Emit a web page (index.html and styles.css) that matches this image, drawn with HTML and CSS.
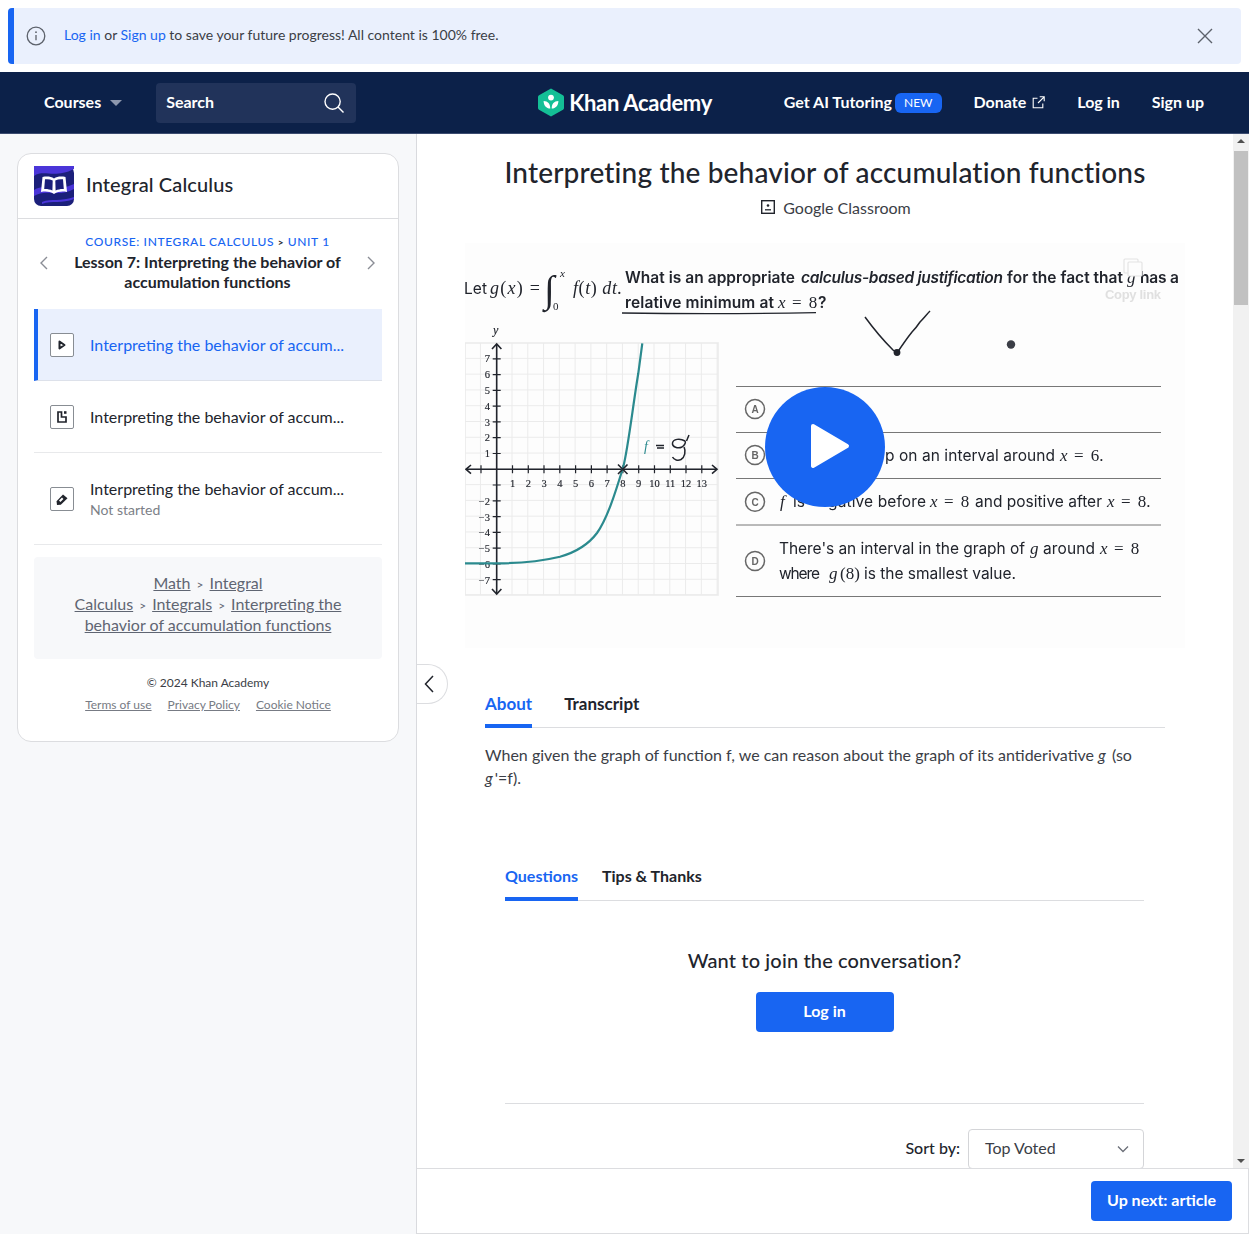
FILE: index.html
```html
<!DOCTYPE html>
<html lang="en">
<head>
<meta charset="utf-8">
<title>Interpreting the behavior of accumulation functions</title>
<link rel="stylesheet" href="styles.css">
</head>
<body>
<div class="banner">
  <svg class="banner-info" width="20" height="20" viewBox="0 0 20 20"><circle cx="10" cy="10" r="8.8" fill="none" stroke="#5c616b" stroke-width="1.3"/><path d="M10 9v5.2" stroke="#5c616b" stroke-width="1.3" fill="none"/><circle cx="10" cy="6.2" r=".9" fill="#5c616b"/></svg>
  <p class="banner-text"><a class="link">Log in</a> or <a class="link">Sign up</a> to save your future progress! All content is 100% free.</p>
  <svg class="banner-close" width="16" height="16" viewBox="0 0 16 16"><path d="M1 1l14 14M15 1L1 15" stroke="#5c616b" stroke-width="1.4" fill="none"/></svg>
</div>
<nav class="nav">
  <span class="nav-item">Courses</span>
  <span class="caret"></span>
  <div class="search">
    <span class="nav-item">Search</span>
    <svg width="22" height="22" viewBox="0 0 22 22"><circle cx="9.6" cy="9.6" r="7.6" fill="none" stroke="#fff" stroke-width="1.4"/><path d="M15 15l5.5 5.5" stroke="#fff" stroke-width="1.4" fill="none"/></svg>
  </div>
  <div class="logo">
    <svg width="28" height="29" viewBox="0 0 28 29"><path d="M14 .5l12 6.8a2 2 0 0 1 1 1.7v11a2 2 0 0 1-1 1.7l-12 6.8-12-6.8a2 2 0 0 1-1-1.7V9a2 2 0 0 1 1-1.7z" fill="#14bf96"/><circle cx="14" cy="9.6" r="2.9" fill="#fff"/><path d="M6.6 13c4.300.2 6.600 2.700 6.700 7.600-4.100-.3-6.500-2.900-6.700-7.600zM21.400 13c-4.300.2-6.600 2.700-6.700 7.600 4.100-.3 6.500-2.900 6.700-7.600z" fill="#fff"/></svg>
    <span class="logo-text">Khan Academy</span>
  </div>
  <div class="nav-right">
    <div class="nav-group"><span class="nav-item">Get AI Tutoring</span><span class="badge">NEW</span></div>
    <div class="nav-group donate"><span class="nav-item">Donate</span><svg width="13" height="13" viewBox="0 0 13 13"><path d="M10.800 7.500v4.300H1.200V2.300h4.300M7.700.8h4.500v4.500M12.200.8L6 7" fill="none" stroke="#fff" stroke-width="1.100"/></svg></div>
    <span class="nav-item">Log in</span>
    <span class="nav-item">Sign up</span>
  </div>
</nav>
<main class="main">
  <aside class="sidebar">
    <div class="card">
      <header class="card-head">
        <svg class="course-icon" width="40" height="40" viewBox="0 0 40 40"><rect width="40" height="40" rx="7" fill="#1b1f7a"/><path d="M0 10C10 3 20 13 40 3V0H0zM0 24c12-7 20 3 40-6v5C24 32 12 22 0 30zM8 36c10-4 18 0 32-5v2c-12 5-22 1-32 5z" fill="#4a35d8"/><path d="M20 12.500c-3-2-7-2.500-11.500-1.500l-1.500 15c4.500-1 9-.5 13 2 4-2.500 8.500-3 13-2l-1.500-15c-4.500-1-8.500-.5-11.500 1.500z" fill="#fff"/><path d="M11 13.300c2.700-.4 5.300 0 7.700 1.200l-.3 10c-2.700-1.200-5.300-1.700-8.200-1.500zM29 13.300c-2.700-.4-5.300 0-7.700 1.200l.3 10c2.700-1.200 5.300-1.700 8.200-1.500z" fill="#1b1f7a"/></svg>
        <h2 class="course-name">Integral Calculus</h2>
      </header>
      <div class="lesson-head">
        <svg class="chev" width="9" height="14" viewBox="0 0 9 14"><path d="M8 1L2 7l6 6" fill="none" stroke="#8a8d95" stroke-width="1.400"/></svg>
        <div class="lesson-title">
          <div class="crumbs"><span>COURSE: INTEGRAL CALCULUS</span> <b>&gt;</b> <span>UNIT 1</span></div>
          <h3 class="lesson-name">Lesson 7: Interpreting the behavior of accumulation functions</h3>
        </div>
        <svg class="chev" width="9" height="14" viewBox="0 0 9 14"><path d="M1 1l6 6-6 6" fill="none" stroke="#8a8d95" stroke-width="1.400"/></svg>
      </div>
      <ul class="items">
        <li class="item selected">
          <span class="item-icon"><svg width="12" height="12" viewBox="0 0 12 12"><path d="M3.500 2.500l5 3.500-5 3.500z" fill="none" stroke="#21242c" stroke-width="2" stroke-linejoin="round"/></svg></span>
          <div class="item-body"><div class="item-title">Interpreting the behavior of accum...</div></div>
        </li>
        <li class="item">
          <span class="item-icon"><svg width="12" height="14" viewBox="0 0 12 14"><path d="M2 2h3.500v5H10v5H2z" fill="none" stroke="#21242c" stroke-width="1.700"/><path d="M8 1.200h2.500v2.600H8z" fill="#21242c"/></svg></span>
          <div class="item-body"><div class="item-title">Interpreting the behavior of accum...</div></div>
        </li>
        <li class="item tall">
          <span class="item-icon"><svg width="14" height="14" viewBox="0 0 14 14"><path d="M1.500 9.300L8 2.500l4.500 3.700-6.700 6.500-3.800.3z" fill="#21242c"/><path d="M4.700 9.300l3-3.100" stroke="#fff" stroke-width="2"/></svg></span>
          <div class="item-body offset"><div class="item-title">Interpreting the behavior of accum...</div><div class="item-sub">Not started</div></div>
        </li>
      </ul>
      <div class="breadcrumb">
        <div class="crumb-line"><a>Math</a><span class="sep">&gt;</span><a>Integral</a></div>
        <div class="crumb-line"><a>Calculus</a><span class="sep">&gt;</span><a>Integrals</a><span class="sep">&gt;</span><a>Interpreting the</a></div>
        <div class="crumb-line"><a>behavior of accumulation functions</a></div>
      </div>
      <div class="copyright">© 2024 Khan Academy</div>
      <div class="legal"><a>Terms of use</a><a>Privacy Policy</a><a>Cookie Notice</a></div>
    </div>
  </aside>
  <section class="right">
    <div class="scroll-row">
      <div class="content">
        <button class="collapse" aria-label="Collapse"><svg width="10" height="18" viewBox="0 0 10 18"><path d="M9 1L1.500 9 9 17" fill="none" stroke="#21242c" stroke-width="1.500"/></svg></button>
        <h1 class="title">Interpreting the behavior of accumulation functions</h1>
        <div class="classroom"><svg width="14" height="14" viewBox="0 0 14 14"><rect x=".7" y=".7" width="12.600" height="12.600" fill="none" stroke="#21242c" stroke-width="1.400"/><circle cx="7" cy="5.500" r="1.300" fill="#21242c"/><path d="M4 9.800h6" stroke="#21242c" stroke-width="1.300"/></svg><span>Google Classroom</span></div>
        <div class="video">
          <svg class="frame" width="720" height="405" viewBox="465 243 720 405">
            <defs>
              <pattern id="grid" x="465.140" y="343.070" width="15.780" height="15.780" patternUnits="userSpaceOnUse"><path d="M15.780 0V15.780H0" fill="none" stroke="#ebebeb" stroke-width="2"/></pattern>
            </defs>
            <rect x="465" y="243" width="720" height="405" fill="#fdfdfd"/>
            <text class="v-sans" x="464" y="294" textLength="23">Let</text>
            <text class="v-math" x="490" y="294" textLength="50"><tspan>g</tspan><tspan class="v-up">(</tspan><tspan>x</tspan><tspan class="v-up">)</tspan> <tspan class="v-up">=</tspan></text>
            <text class="v-int" x="544" y="302">∫</text>
            <text class="v-small" x="560" y="277">x</text>
            <text class="v-small up" x="553" y="310">0</text>
            <text class="v-math" x="573" y="294" textLength="49">f<tspan class="v-up">(</tspan>t<tspan class="v-up">)</tspan> dt.</text>
            <text class="v-q" x="625" y="283" textLength="170">What is an appropriate</text>
            <text class="v-q it" x="801" y="283" textLength="202">calculus-based justification</text>
            <text class="v-q" x="1007" y="283" textLength="116">for the fact that</text>
            <text class="v-math sm" x="1127" y="283">g</text>
            <text class="v-q" x="1140" y="283" textLength="39">has a</text>
            <text class="v-q" x="625" y="308" textLength="149">relative minimum at</text>
            <text class="v-math sm" x="778" y="308">x</text><text class="v-math-up" x="792" y="308">= 8</text>
            <text class="v-q" x="818" y="308">?</text>
            <path d="M622 313c60 .8 130 .8 194-.4" fill="none" stroke="#21242c" stroke-width="1.300"/>
            <rect x="1124" y="259" width="14" height="14" rx="1" fill="none" stroke="#e4e4e4" stroke-width="1.200"/><rect x="1128" y="262" width="14" height="14" rx="1" fill="#fdfdfd" stroke="#e4e4e4" stroke-width="1.200"/>
            <text class="v-copy" x="1105" y="299" textLength="56">Copy link</text>
            <rect x="465" y="343" width="253" height="252" fill="url(#grid)"/>
            <rect x="465" y="343" width="253" height="252" fill="none" stroke="#ebebeb" stroke-width="1.600"/>
            <text class="v-tick it" x="493" y="334">y</text>
            <path d="M496.700 345V593M466 469.300H717" fill="none" stroke="#21242c" stroke-width="1.600"/>
            <path d="M492 349l4.700-5 4.700 5M492 589l4.700 5 4.700-5M471 465l-5 4.300 5 4.300M712 465l5 4.300-5 4.300" fill="none" stroke="#21242c" stroke-width="1.600"/>
            <path d="M492.700 358.800h8M492.700 374.600h8M492.700 390.400h8M492.700 406.100h8M492.700 421.900h8M492.700 437.700h8M492.700 453.500h8M492.700 485h8M492.700 500.800h8M492.700 516.600h8M492.700 532.400h8M492.700 548.100h8M492.700 563.900h8M492.700 579.700h8M481 465.300v8M512.500 465.300v8M528.300 465.300v8M544 465.300v8M559.800 465.300v8M575.600 465.300v8M591.400 465.300v8M607.100 465.300v8M622.900 465.300v8M638.700 465.300v8M654.500 465.300v8M670.300 465.300v8M686 465.300v8M701.800 465.300v8" fill="none" stroke="#21242c" stroke-width="1.200"/>
            <g class="v-tick">
              <text x="512.500" y="487" text-anchor="middle">1</text><text x="528.300" y="487" text-anchor="middle">2</text><text x="544" y="487" text-anchor="middle">3</text><text x="559.800" y="487" text-anchor="middle">4</text><text x="575.600" y="487" text-anchor="middle">5</text><text x="591.400" y="487" text-anchor="middle">6</text><text x="607.100" y="487" text-anchor="middle">7</text><text x="622.900" y="487" text-anchor="middle">8</text><text x="638.700" y="487" text-anchor="middle">9</text><text x="654.500" y="487" text-anchor="middle">10</text><text x="670.300" y="487" text-anchor="middle">11</text><text x="686" y="487" text-anchor="middle">12</text><text x="701.800" y="487" text-anchor="middle">13</text>
              <text x="490" y="362" text-anchor="end">7</text><text x="490" y="378" text-anchor="end">6</text><text x="490" y="394" text-anchor="end">5</text><text x="490" y="409.500" text-anchor="end">4</text><text x="490" y="425.500" text-anchor="end">3</text><text x="490" y="441" text-anchor="end">2</text><text x="490" y="457" text-anchor="end">1</text>
              <text x="490" y="505" text-anchor="end">−2</text><text x="490" y="520.500" text-anchor="end">−3</text><text x="490" y="536" text-anchor="end">−4</text><text x="490" y="552" text-anchor="end">−5</text><text x="490" y="568" text-anchor="end">−6</text><text x="490" y="583.500" text-anchor="end">−7</text>
            </g>
            <path d="M465 563.300H497C515 563.300 540 561.500 560 556.700C575 552.500 588 545 597 533C607 519 615 494 623.300 466.700C628 449 633 405 638.300 373.300L642.300 343.300" fill="none" stroke="#2b8a8e" stroke-width="2.200"/>
            <path d="M618 464.500l9.500 9.500M618 474l9.500-9.500" stroke="#21242c" stroke-width="1.600" fill="none"/>
            <text class="v-f" x="644" y="451">f</text>
            <path d="M656 445.500h8M657 448h7" stroke="#21242c" stroke-width="1.400" fill="none"/>
            <path d="M685 441C680 438 673 439 672.500 443C672 447 678 449 682 447C685 445 686 442 685 441M684 447C686 451 685 457 681 459.500C678 461 674 460 672.500 457M689 435l-2.500 6" fill="none" stroke="#21242c" stroke-width="1.500"/>
            <path d="M865 317c8 11 20 25 28 33l4 3c4-6 11-16 15-21 3-3 6-7 8-10 4-4 7-8 10-11" fill="none" stroke="#21242c" stroke-width="1.500"/>
            <circle cx="897" cy="352.500" r="3.400" fill="#21242c"/>
            <circle cx="1011" cy="344.500" r="4.200" fill="#3b3e46"/>
            <path d="M736 386.500h425M736 432.500h425M736 478.500h425M736 525h425M736 596.500h425" stroke="#777" stroke-width="1"/>
            <g class="v-choice"><circle cx="755" cy="409" r="9.500"/><circle cx="755" cy="455" r="9.500"/><circle cx="755" cy="501.800" r="9.500"/><circle cx="755" cy="561" r="9.500"/></g>
            <g class="v-letter"><text x="755" y="412.800" text-anchor="middle">A</text><text x="755" y="458.800" text-anchor="middle">B</text><text x="755" y="505.500" text-anchor="middle">C</text><text x="755" y="564.800" text-anchor="middle">D</text></g>
            <text class="v-a" x="885" y="461" textLength="170">p on an interval around</text>
            <text class="v-math sm" x="1060" y="461">x</text><text class="v-math-up" x="1074" y="461">= 6.</text>
            <text class="v-math sm" x="780" y="507">f</text><text class="v-a" x="793" y="507">is</text>
            <text class="v-a" x="828" y="507" textLength="98">gative before</text>
            <text class="v-math sm" x="930" y="507">x</text><text class="v-math-up" x="944" y="507">= 8</text>
            <text class="v-a" x="975" y="507" textLength="127">and positive after</text>
            <text class="v-math sm" x="1107" y="507">x</text><text class="v-math-up" x="1121" y="507">= 8.</text>
            <text class="v-a" x="779" y="554" textLength="246">There's an interval in the graph of</text>
            <text class="v-math sm" x="1030" y="554">g</text>
            <text class="v-a" x="1043" y="554" textLength="52">around</text>
            <text class="v-math sm" x="1100" y="554">x</text><text class="v-math-up" x="1114" y="554">= 8</text>
            <text class="v-a" x="779" y="579" textLength="41">where</text>
            <text class="v-math sm" x="829" y="579">g</text><text class="v-math-up" x="840" y="579">(8)</text>
            <text class="v-a" x="864" y="579" textLength="152">is the smallest value.</text>
          </svg>
          <div class="play"><svg width="40" height="46" viewBox="0 0 40 46"><path d="M3 3l34 20L3 43z" fill="#fff" stroke="#fff" stroke-width="4" stroke-linejoin="round"/></svg></div>
        </div>
        <div class="about">
          <div class="tabs">
            <span class="tab active">About</span><span class="tab">Transcript</span>
          </div>
          <p class="desc">When given the graph of function f, we can reason about the graph of its antiderivative <i>g</i> (so <i>g</i>'=f).</p>
        </div>
        <div class="discussion">
          <div class="tabs small">
            <span class="tab active">Questions</span><span class="tab">Tips &amp; Thanks</span>
          </div>
          <h2 class="join">Want to join the conversation?</h2>
          <button class="login">Log in</button>
          <hr class="rule">
          <div class="sort"><span class="sort-label">Sort by:</span><div class="select"><span>Top Voted</span><svg width="12" height="8" viewBox="0 0 12 8"><path d="M1 1.500l5 5 5-5" fill="none" stroke="#6b6f78" stroke-width="1.300"/></svg></div></div>
        </div>
      </div>
      <div class="scrollbar">
        <span class="sb-up"></span>
        <span class="sb-thumb"></span>
        <span class="sb-down"></span>
      </div>
    </div>
    <footer class="next-bar"><button class="next">Up next: article</button></footer>
  </section>
</main>
</body>
</html>
```
FILE: styles.css
```css
* { box-sizing: border-box; }
html, body { margin: 0; padding: 0; }
body {
  width: 1249px; height: 1234px; overflow: hidden;
  font-family: Lato, "Noto Sans", sans-serif; color: #21242c; background: #fff;
  display: flex; flex-direction: column;
}
h1, h2, h3, p, ul { margin: 0; padding: 0; }
button { font-family: inherit; border: 0; cursor: pointer; }

.banner {
  margin: 8px 8px 8px; height: 56px; flex: none;
  background: #eaf0fd; border-left: 6px solid #1865f2; border-radius: 4px;
  display: flex; align-items: center; padding-left: 12px; padding-right: 28px;
}
.banner-text { font-size: 14px; margin-left: 18px; flex: 1; color: #3b3e46; padding-bottom: 3px; }
.link { color: #1865f2; }

.nav {
  height: 62px; flex: none; background: #0c2149; border-bottom: 1px solid #3c4c70;
  display: flex; align-items: center; padding: 0 45px 0 44px; color: #fff;
}
.nav-item { font-size: 16px; font-weight: 700; color: #fff; white-space: nowrap; padding-bottom: 2px; }
.caret { width: 0; height: 0; margin-left: 9px; border: 6px solid transparent; border-top: 6px solid #8d97ad; border-bottom: 0; }
.search {
  width: 200px; height: 40px; margin-left: 34px; padding: 0 11px 0 10px;
  background: #21335a; border-radius: 4px; display: flex; align-items: center; justify-content: space-between;
}
.logo { display: flex; align-items: center; gap: 4px; margin-left: 181px; }
.logo-text { font-size: 22px; font-weight: 700; letter-spacing: -.3px; color: #fff; white-space: nowrap; }
.nav-right { margin-left: auto; display: flex; align-items: center; gap: 32px; }
.nav-group { display: flex; align-items: center; gap: 3px; }
.donate { gap: 6px; }
.badge { background: #1865f2; color: #fff; font-size: 12px; font-weight: 400; padding: 0 9px; height: 20px; line-height: 20px; border-radius: 6px; }

.main { flex: 1; display: flex; min-height: 0; }
.sidebar { width: 417px; flex: none; background: #f7f8fa; border-right: 1px solid #d9dade; padding: 19px 17px 0; }
.card { width: 382px; background: #fff; border: 1px solid #dcdde0; border-radius: 14px; height: 589px; }
.card-head { height: 65px; border-bottom: 1px solid #dcdde0; display: flex; align-items: center; padding-left: 16px; gap: 12px; }
.course-icon { flex: none; }
.course-name { font-size: 20px; font-weight: 500; letter-spacing: .12px; color: #21242c; padding-bottom: 4px; }
.lesson-head { display: flex; align-items: center; justify-content: space-between; padding: 16px 22px 18px 21px; height: 90px; }
.lesson-title { width: 319px; text-align: center; }
.crumbs { font-size: 12px; font-weight: 500; color: #1865f2; letter-spacing: .62px; line-height: 16px; white-space: nowrap; }
.crumbs b { font-size: 10px; color: #21242c; }
.lesson-name { font-size: 16px; font-weight: 700; line-height: 20px; padding: 2px 14px 0; color: #21242c; }
.items { list-style: none; margin: 0 16px; }
.item { display: flex; align-items: center; height: 72px; padding-left: 16px; border-bottom: 1px solid #e8e9eb; gap: 16px; font-size: 16px; }
.item.selected { background: #eaf0fd; border-left: 4px solid #1865f2; padding-left: 12px; border-bottom-color: #dde1ea; }
.item.selected .item-title { color: #1865f2; }
.item.tall { height: 92px; }
.item-icon { width: 24px; height: 24px; flex: none; background: #fff; border: 1px solid #888d93; border-radius: 2px; display: flex; align-items: center; justify-content: center; }
.item-body.offset { padding-top: 2px; }
.item-title { white-space: nowrap; color: #21242c; }
.item-sub { font-size: 14px; color: #7c7f87; line-height: 20px; margin-top: 2px; }
.breadcrumb { margin: 12px 16px 0; height: 102px; padding: 15px 24px 0; background: #f7f8fa; border-radius: 4px; text-align: center; font-size: 16px; line-height: 21px; color: #5f6572; }
.crumb-line { height: 21px; white-space: nowrap; }
.breadcrumb a { text-decoration: underline; }
.sep { font-size: 12px; line-height: 1; margin: 0 6px; }
.copyright { margin-top: 16px; text-align: center; font-size: 12px; line-height: 16px; color: #3b3e46; }
.legal { margin-top: 6px; display: flex; justify-content: center; gap: 16px; font-size: 12px; line-height: 16px; color: #777b84; }
.legal a { text-decoration: underline; }

.right { flex: 1; min-width: 0; display: flex; flex-direction: column; }
.scroll-row { flex: 1; min-height: 0; display: flex; overflow: hidden; }
.content { flex: 1; min-width: 0; position: relative; padding-top: 20px; overflow: hidden; }
.collapse { position: absolute; left: 0; top: 530px; width: 31px; height: 40px; background: #fff; border: 1px solid #dcdde0; border-left: 0; border-radius: 0 20px 20px 0; padding: 0 0 0 7px; display: flex; align-items: center; }
.title { font-size: 28px; font-weight: 500; letter-spacing: .16px; line-height: 36px; text-align: center; color: #21242c; }
.classroom { margin-top: 7px; margin-left: 22px; height: 20px; display: flex; align-items: center; justify-content: center; gap: 8px; font-size: 16px; color: #3b3e46; }
.video { position: relative; width: 720px; height: 405px; margin: 26px auto 0; }
.frame { display: block; filter: blur(.3px); }
.play { position: absolute; left: 300px; top: 144px; width: 120px; height: 120px; background: #1865f2; border-radius: 50%; display: flex; align-items: center; justify-content: center; padding-left: 10px; padding-bottom: 2px; }
.v-sans, .v-a, .v-q { font-family: Inter, "Liberation Sans", sans-serif; font-size: 15.5px; fill: #21242c; }
.v-q { font-weight: 600; }
.v-q.it { font-style: italic; }
.v-math { font-family: "Liberation Serif", serif; font-style: italic; font-size: 18px; fill: #21242c; }
.v-math.sm { font-size: 17px; }
.v-up, .v-math-up { font-style: normal; }
.v-math-up { font-family: "Liberation Serif", serif; font-size: 17px; word-spacing: 3px; fill: #21242c; }
.v-int { font-family: "Liberation Serif", serif; font-style: italic; font-size: 38px; fill: #21242c; }
.v-small { font-family: "Liberation Serif", serif; font-style: italic; font-size: 11px; fill: #21242c; }
.v-small.up { font-style: normal; }
.v-tick { font-family: "Liberation Serif", serif; font-size: 10.5px; fill: #21242c; stroke: #21242c; stroke-width: .15; }
.v-tick.it { font-style: italic; font-size: 12px; }
.v-copy { font-family: "Liberation Sans", sans-serif; font-size: 13px; font-weight: 700; fill: #e0e0e0; }
.v-f { font-family: "Liberation Serif", serif; font-style: italic; font-size: 14px; fill: #2b8a8e; }
.v-choice circle { fill: none; stroke: #666; stroke-width: 1.500; }
.v-letter { font-family: "Liberation Sans", sans-serif; font-size: 10px; font-weight: 700; fill: #666; }

.about { margin: 36px 68px 0; }
.tabs { display: flex; gap: 32px; border-bottom: 1px solid #dcdde0; height: 44px; }
.tab { font-size: 17px; font-weight: 700; line-height: 40px; color: #21242c; }
.tab.active { color: #1865f2; border-bottom: 4px solid #1865f2; height: 44px; }
.desc { font-size: 16px; line-height: 23px; margin-top: 15px; color: #3b3e46; }
.desc i { line-height: 1; padding-right: 2px; }
.discussion { margin: 67px 89px 0 88px; }
.tabs.small { gap: 24px; height: 45px; }
.tabs.small .tab { font-size: 16px; font-weight: 700; }
.tabs.small .tab.active { height: 45px; }
.join { margin-top: 45px; font-size: 20px; font-weight: 500; letter-spacing: .14px; line-height: 28px; text-align: center; }
.login { display: block; margin: 18px auto 0; width: 138px; height: 40px; background: #1865f2; color: #fff; font-size: 16px; font-weight: 700; border-radius: 4px; padding-bottom: 5px; }
.rule { border: 0; border-top: 1px solid #dcdde0; margin: 71px 0 0; }
.sort { margin-top: 25px; display: flex; justify-content: flex-end; align-items: center; gap: 8px; }
.sort-label { font-size: 16px; font-weight: 500; padding-bottom: 4px; }
.select { width: 176px; height: 40px; border: 1px solid #d4d5d8; border-radius: 4px; padding: 0 14px 4px 16px; display: flex; align-items: center; justify-content: space-between; font-size: 16px; color: #3b3e46; }
.select svg { margin-top: 4px; }

.scrollbar { width: 16px; flex: none; background: #f1f1f1; position: relative; }
.sb-thumb { position: absolute; left: 1px; top: 17px; width: 14px; height: 154px; background: #c1c1c1; }
.sb-up, .sb-down { position: absolute; left: 4px; width: 0; height: 0; border: 4px solid transparent; }
.sb-up { top: 5px; border-bottom-color: #505050; border-top: 0; }
.sb-down { bottom: 5px; border-top-color: #505050; border-bottom: 0; }

.next-bar { height: 66px; flex: none; border: 1px solid #dcdde0; border-left: 0; display: flex; align-items: center; justify-content: flex-end; padding-right: 16px; }
.next { width: 141px; height: 40px; background: #1865f2; color: #fff; font-size: 16px; font-weight: 700; border-radius: 4px; padding-bottom: 5px; }
```
